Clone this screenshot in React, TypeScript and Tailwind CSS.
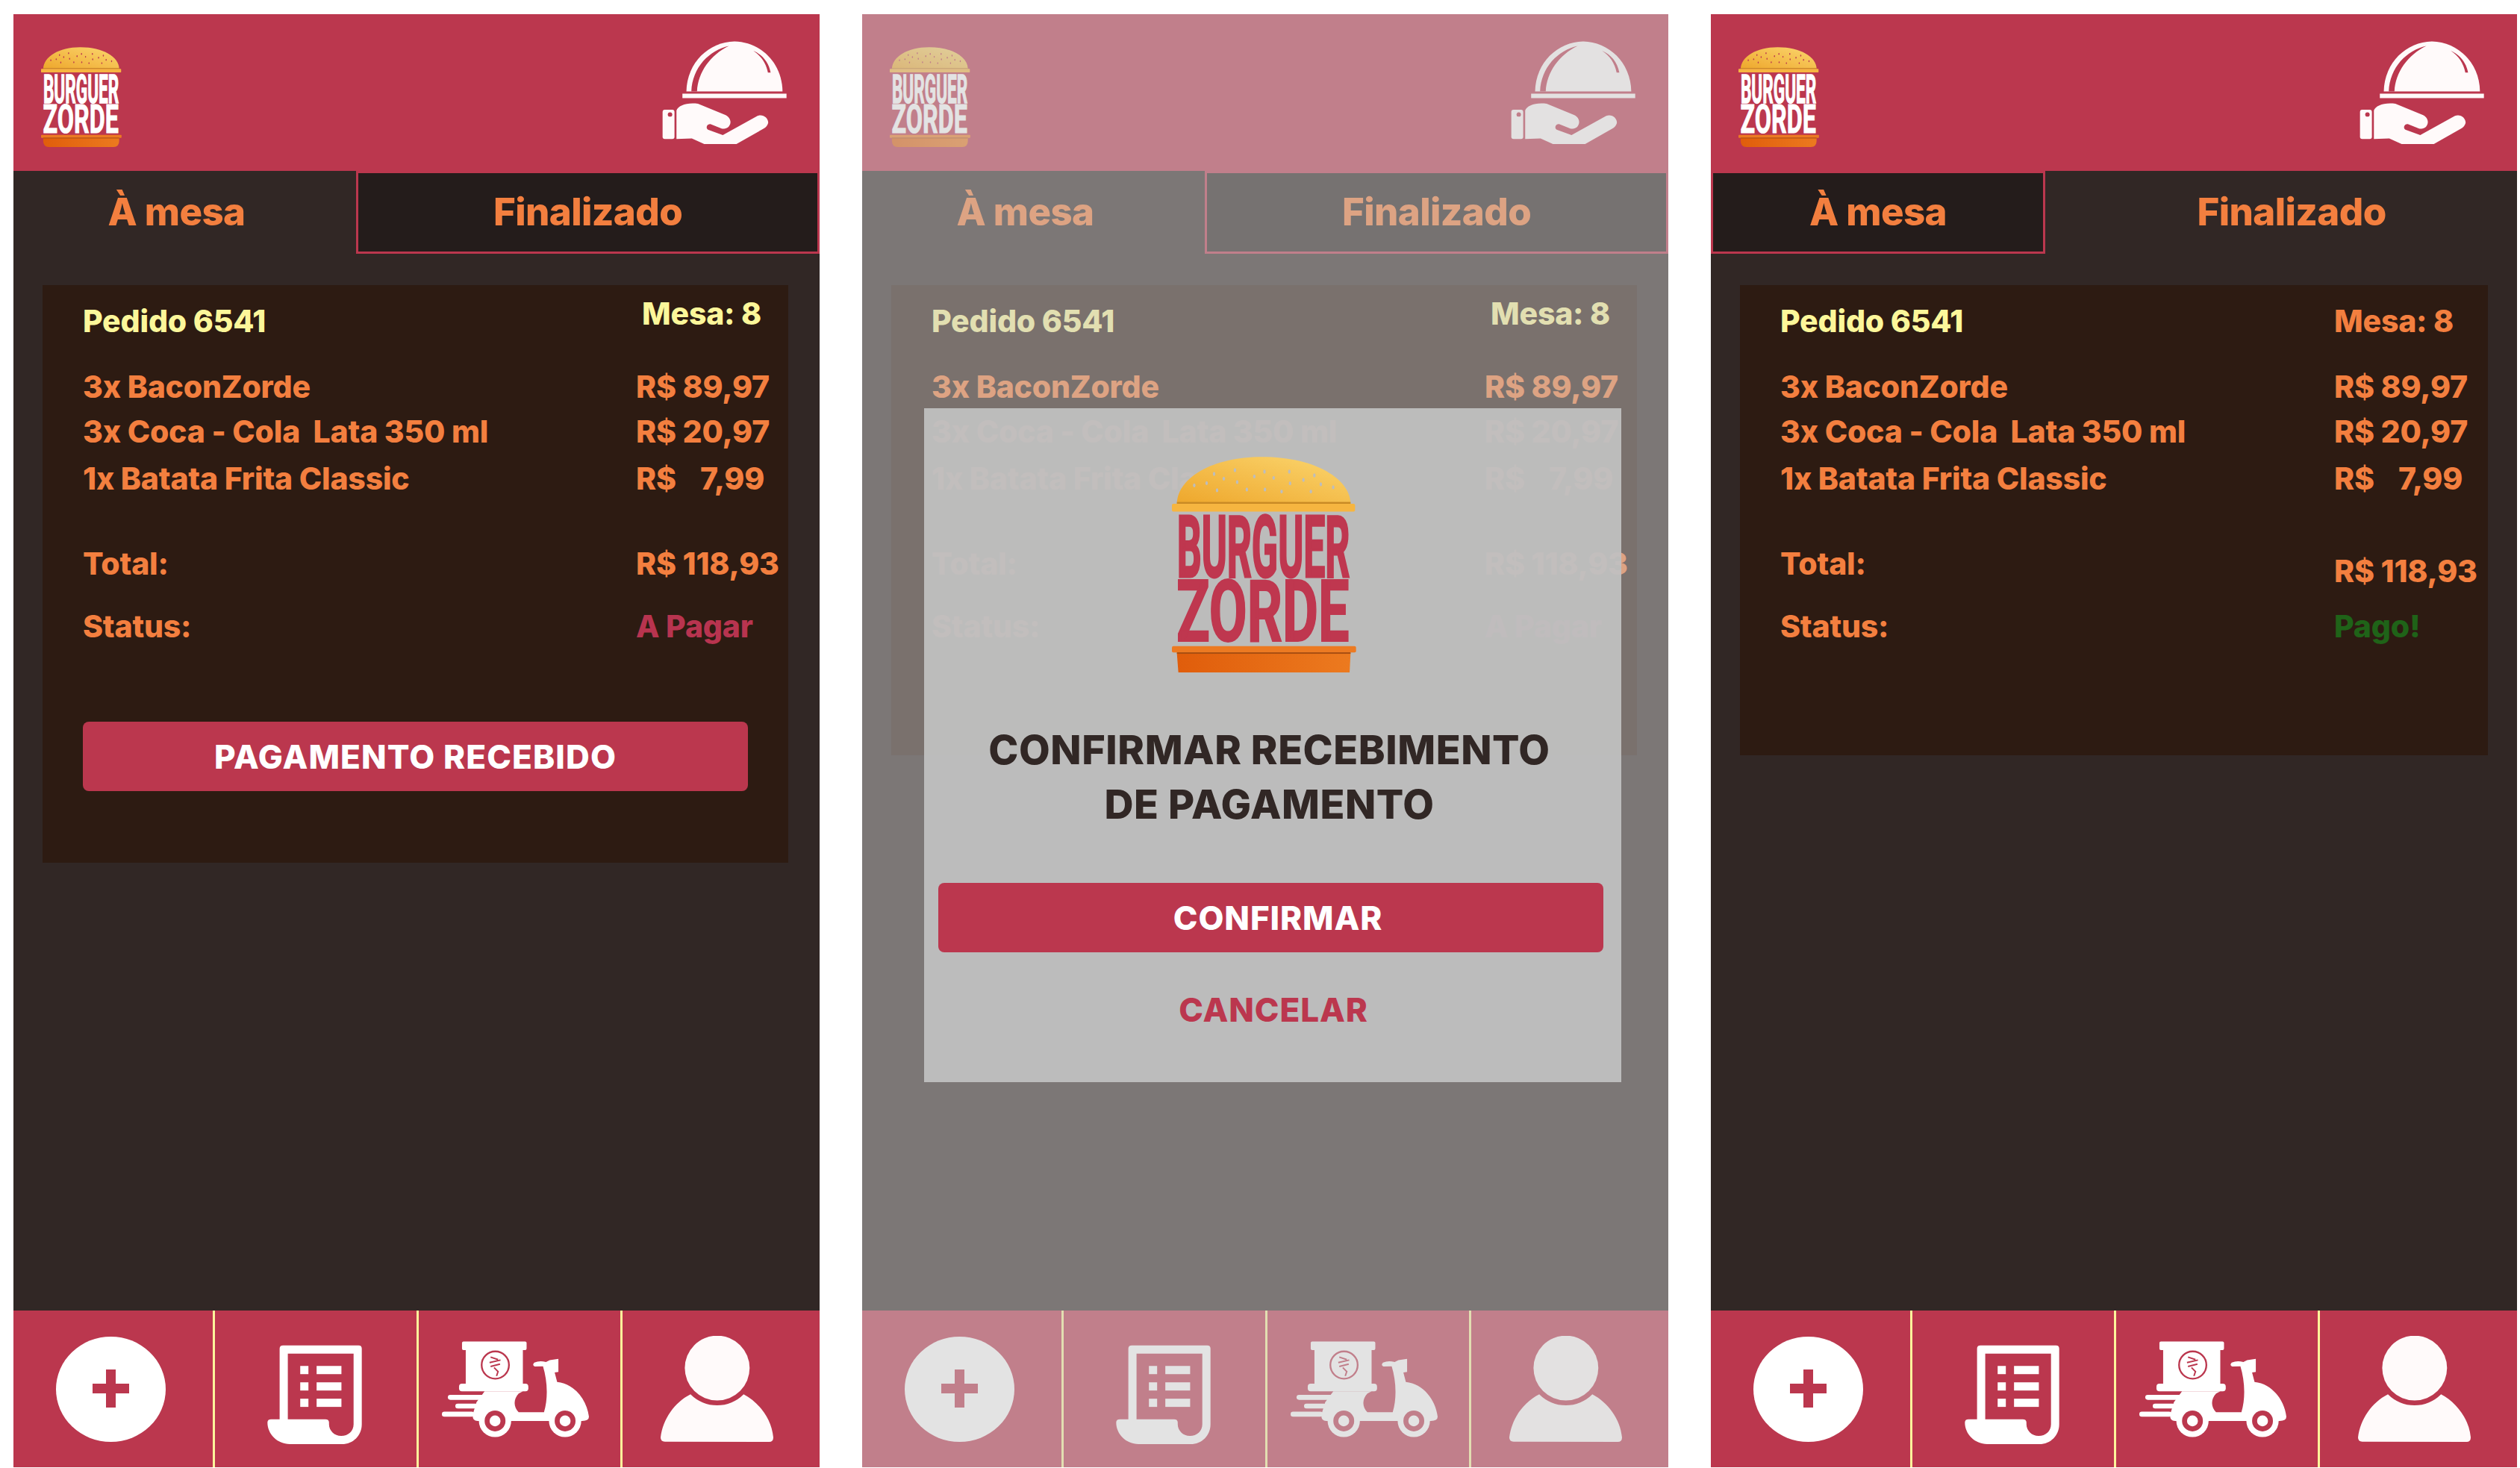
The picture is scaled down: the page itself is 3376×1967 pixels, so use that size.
import * as React from 'react'

const CRIMSON = '#bb374e'
const SEEDS = [
  [178, 150], [228, 141], [258, 104], [297, 123], [342, 89], [351, 137], [270, 170], [390, 167], [420, 114], [461, 95],
  [498, 120], [463, 167], [530, 175], [561, 95], [564, 142], [618, 128], [662, 110], [688, 146], [738, 158], [648, 175],
]

function BurgerLogo({ id, width, height, textColor, seedColor, roundBottom }: { id: string; width: number; height: number; textColor: string; seedColor: string; roundBottom?: boolean }) {
  return (
    <svg width={width} height={height} viewBox="88 35 743 868" preserveAspectRatio="none" className="block shrink-0">
      <defs>
        <linearGradient id={`${id}-bun`} x1="0" y1="1" x2="1" y2="0">
          <stop offset="0" stopColor="#eea72c" />
          <stop offset="1" stopColor="#fbd66f" />
        </linearGradient>
        <linearGradient id={`${id}-base`} x1="0" y1="0" x2="1" y2="0">
          <stop offset="0" stopColor="#e05d0b" />
          <stop offset="1" stopColor="#ec7a1f" />
        </linearGradient>
      </defs>
      <path d="M108 222 C112 120 250 36 450 36 C660 36 804 120 808 222 Z" fill={`url(#${id}-bun)`} />
      {SEEDS.map(([x, y]) => (
        <ellipse key={`${x}-${y}`} cx={x} cy={y} rx="5" ry="8" fill={seedColor} />
      ))}
      <rect x="108" y="217" width="700" height="8" fill="#c98a25" />
      <rect x="88" y="224" width="738" height="32" rx="6" fill="#f6b540" />
      <text transform="translate(108 518) scale(0.451 1)" fontFamily="Roboto, sans-serif" fontWeight="700" fontSize="345" fill={textColor} stroke={textColor} strokeWidth="9">
        BURGUER
      </text>
      <text transform="translate(106 778) scale(0.644 1)" fontFamily="Roboto, sans-serif" fontWeight="700" fontSize="345" fill={textColor} stroke={textColor} strokeWidth="6">
        ZORDE
      </text>
      <path
        d={roundBottom ? 'M108 826 L808 826 L808 850 Q808 903 755 903 L161 903 Q108 903 108 850 Z' : 'M108 826 L808 826 L804 903 L114 903 Z'}
        fill={`url(#${id}-base)`}
      />
      <rect x="88" y="797" width="742" height="26" rx="6" fill="#ec7a22" />
      <rect x="108" y="822" width="700" height="6" fill="#a94e10" />
    </svg>
  )
}

function ClocheIcon() {
  return (
    <svg width="167" height="138" viewBox="50 45 503 415" className="block shrink-0">
      <path d="M148 248 C150 130 240 48 342 46 C445 48 534 130 536 248 Z" fill="#fffafa" />
      <path d="M320 64 C240 82 172 150 168 248 L191 248 C195 170 245 100 320 64 Z" fill={CRIMSON} />
      <path d="M418 84 C455 100 480 130 488 172 L477 172 C470 135 450 105 418 84 Z" fill={CRIMSON} />
      <rect x="132" y="257" width="420" height="18" fill="#fffafa" />
      <rect x="52" y="322" width="48" height="118" rx="9" fill="#fffafa" />
      <circle cx="82" cy="341" r="9" fill={CRIMSON} />
      <path
        d="M108 325 C115 305 150 292 195 298 L305 343 C322 350 332 370 322 385 C315 398 300 400 290 398 L245 380 C232 378 224 395 235 402 L295 424 L435 347 C455 337 480 355 478 375 C476 385 468 393 460 398 L350 460 L220 460 L170 438 L108 440 Z"
        fill="#fffafa"
      />
    </svg>
  )
}

function PlusIcon() {
  return (
    <svg width="147" height="141" viewBox="0 0 147 141" className="block">
      <ellipse cx="73.5" cy="70.5" rx="73.5" ry="70.5" fill="#fff" />
      <rect x="49" y="63" width="49" height="13" fill={CRIMSON} />
      <rect x="67" y="44" width="13" height="51" fill={CRIMSON} />
    </svg>
  )
}

function OrdersIcon() {
  return (
    <svg width="127" height="133" viewBox="85 65 380 400" className="block">
      <path
        fillRule="evenodd"
        d="M134 80 Q134 67 148 67 L452 67 Q465 67 465 80 L465 385 C465 430 430 465 385 465 L175 465 C125 465 85 425 85 378 Q85 365 100 365 L134 365 Z M167 100 L432 100 L432 385 C432 412 410 432 382 432 C355 432 333 410 333 385 L333 378 Q333 365 318 365 L167 365 Z"
        fill="#fff"
      />
      {[150, 216, 282].map((y) => (
        <g key={y} fill="#fff">
          <rect x="217" y={y} width="33" height="33" />
          <rect x="283" y={y} width="100" height="33" />
        </g>
      ))}
    </svg>
  )
}

function ScooterIcon() {
  return (
    <svg width="197" height="129" viewBox="36 55 592 385" className="block">
      <rect x="117" y="55" width="260" height="35" rx="6" fill="#fff" />
      <rect x="132" y="88" width="230" height="140" fill="#fff" />
      <rect x="105" y="225" width="279" height="31" rx="12" fill="#fff" />
      <circle cx="251" cy="150" r="55" fill="none" stroke={CRIMSON} strokeWidth="7" />
      <path d="M232 118 L262 128 M228 140 L272 130 M232 156 L270 146 M246 160 L262 176 L256 194" fill="none" stroke={CRIMSON} strokeWidth="6" />
      <rect x="60" y="270" width="145" height="20" rx="10" fill="#fff" />
      <rect x="90" y="305" width="90" height="20" rx="10" fill="#fff" />
      <rect x="36" y="338" width="130" height="20" rx="10" fill="#fff" />
      <path
        d="M208 256 L175 300 L160 350 Q158 375 180 375 L600 375 Q628 375 628 358 C620 290 570 225 500 218 L490 180 L505 178 L505 125 L470 130 L455 138 Q430 130 408 140 Q398 150 410 156 L443 155 C460 210 465 280 447 340 L345 340 C325 320 322 290 345 265 L362 256 Z"
        fill="#fff"
      />
      {[250, 532].map((x) => (
        <g key={x}>
          <circle cx={x} cy="375" r="65" fill="#fff" />
          <circle cx={x} cy="375" r="42" fill={CRIMSON} />
          <circle cx={x} cy="375" r="22" fill="#fff" />
        </g>
      ))}
    </svg>
  )
}

function PersonIcon() {
  return (
    <svg width="151" height="142" viewBox="45 28 452 425" className="block">
      <circle cx="272" cy="157" r="130" fill="#fffafa" />
      <path d="M165 262 A150 150 0 0 0 378 262 C440 295 490 360 497 435 Q497 453 480 453 L62 452 Q45 452 45 435 C55 360 100 295 165 262 Z" fill="#fffafa" />
    </svg>
  )
}

function Tabs({ active }: { active: 'mesa' | 'finalizado' }) {
  const on = 'bg-[#241c1b] border-[3px] border-[#bb374e]'
  return (
    <div className="flex h-[111px] text-[51px] font-extrabold tracking-[-0.012em] text-[#f37f3f]">
      <div className={active === 'mesa' ? `w-[448px] flex justify-center pt-[14px] ${on}` : 'w-[459px] flex justify-center pt-[17px] pr-[22px]'}>À mesa</div>
      <div className={active === 'finalizado' ? `flex-1 flex justify-center pt-[14px] ${on}` : 'flex-1 flex justify-center pt-[17px] pl-[28px]'}>Finalizado</div>
    </div>
  )
}

function Row({ left, right, className, rightClassName, wide }: { left: string; right: string; className?: string; rightClassName?: string; wide?: boolean }) {
  return (
    <div className={`grid ${wide ? 'grid-cols-[742px_1fr]' : 'grid-cols-[741px_1fr]'} h-[48px] whitespace-pre ${className ?? ''}`}>
      <span>{left}</span>
      <span className={rightClassName}>{right}</span>
    </div>
  )
}

function OrderCard({ paid, withButton }: { paid?: boolean; withButton?: boolean }) {
  return (
    <div className={`ml-[39px] mt-[42px] pl-[54px] pt-[24px] bg-[#2d1b12] text-[41px] leading-[48px] font-extrabold tracking-[-0.005em] text-[#f37f3f] ${paid ? 'w-[1002px]' : 'w-[999px]'} ${withButton ? 'h-[774px]' : 'h-[630px]'}`}>
      <Row wide={paid} left="Pedido 6541" right="Mesa: 8" className="text-[#fcf79a]" rightClassName={paid ? 'text-[#f37f3f]' : '-mt-[10px] pl-[8px]'} />
      <Row wide={paid} left="3x BaconZorde" right="R$ 89,97" className="mt-[40px]" />
      <Row wide={paid} left="3x Coca - Cola  Lata 350 ml" right="R$ 20,97" className="mt-[12px]" />
      <Row wide={paid} left="1x Batata Frita Classic" right={'R$   \u20097,99'} className="mt-[15px]" />
      <Row wide={paid} left="Total:" right="R$ 118,93" className="mt-[66px]" rightClassName={paid ? 'mt-[10px]' : ''} />
      <Row wide={paid} left="Status:" right={paid ? 'Pago!' : 'A Pagar'} className="mt-[36px]" rightClassName={paid ? 'text-[#1f6318]' : 'text-[#b8344f]'} />
      {withButton && (
        <div className="mt-[104px] w-[891px] h-[93px] rounded-[8px] bg-[#bb374e] flex items-center justify-center text-[44px] tracking-[0.025em] text-white uppercase">Pagamento recebido</div>
      )}
    </div>
  )
}

function ConfirmDialog() {
  return (
    <div className="absolute left-[83px] top-[528px] w-[934px] h-[903px] bg-[#c0c0c0]/95 flex flex-col items-center pt-[65px] font-extrabold">
      <div className="mr-[24px]">
        <BurgerLogo id="big" width={247} height={289} textColor="#bf374f" seedColor="#bdbdbd" />
      </div>
      <div className="mt-[67px] text-center text-[54px] leading-[73px] tracking-[0.01em] text-[#312725] mr-[9px]">
        <div>CONFIRMAR RECEBIMENTO</div>
        <div>DE PAGAMENTO</div>
      </div>
      <div className="mt-[69px] mr-[5px] w-[891px] h-[93px] rounded-[8px] bg-[#bb374e] flex items-center justify-center text-[44px] tracking-[0.02em] text-white pl-[19px]">CONFIRMAR</div>
      <div className="mt-[53px] h-[48px] text-[44px] leading-[48px] tracking-[0.02em] text-[#bb374e] ml-[2px]">CANCELAR</div>
    </div>
  )
}

function Panel({ tab, paid, withButton, dimmed }: { tab: 'mesa' | 'finalizado'; paid?: boolean; withButton?: boolean; dimmed?: boolean }) {
  return (
    <div className="relative w-[1080px] h-[1947px] shrink-0 flex flex-col bg-[#312725]">
      <header className="h-[210px] shrink-0 bg-[#bb374e] flex justify-between items-start pl-[37px] pr-[44px] pt-[36px]">
        <div className="mt-[8px]">
          <BurgerLogo id={`small-${tab}-${paid ? 'p' : dimmed ? 'd' : 'n'}`} width={108} height={134} textColor="#ffffff" seedColor="#bb374e" roundBottom />
        </div>
        <ClocheIcon />
      </header>
      <Tabs active={tab} />
      <OrderCard paid={paid} withButton={withButton} />
      <div className="flex-1" />
      <nav className="h-[210px] shrink-0 bg-[#bb374e] grid grid-cols-[270px_273px_273px_1fr]">
        <div className="border-r-[3px] border-[#fdf49b] flex items-center justify-center pr-[6px]">
          <PlusIcon />
        </div>
        <div className="border-r-[3px] border-[#fdf49b] flex items-center justify-center pt-[14px] pr-[3px]">
          <OrdersIcon />
        </div>
        <div className="border-r-[3px] border-[#fdf49b] flex items-center justify-center pr-[12px]">
          <ScooterIcon />
        </div>
        <div className="flex items-center justify-center pr-[12px]">
          <PersonIcon />
        </div>
      </nav>
      {dimmed && (
        <div className="absolute inset-0 bg-[#c8c8c8]/50">
          <ConfirmDialog />
        </div>
      )}
    </div>
  )
}

export default function App() {
  return (
    <div className="h-[1967px] w-[3376px] overflow-hidden bg-white pt-[19px] pl-[18px] flex gap-[57px] [font-family:Inter,sans-serif]">
      <Panel tab="finalizado" withButton />
      <Panel tab="finalizado" dimmed />
      <Panel tab="mesa" paid />
    </div>
  )
}
